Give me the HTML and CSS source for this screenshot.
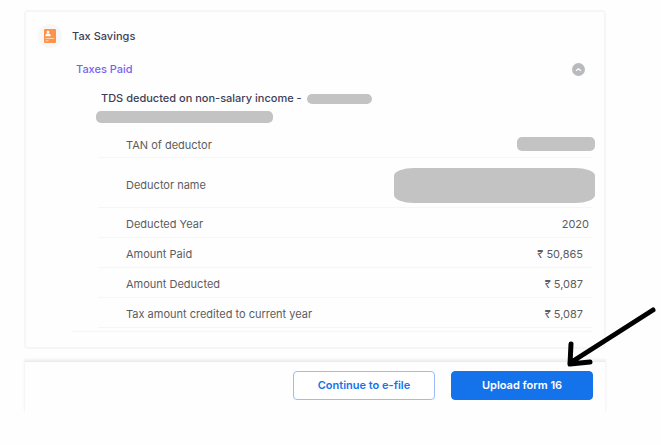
FILE: index.html
```html
<!DOCTYPE html>
<html lang="en">
<head>
    <meta charset="UTF-8">
    <meta name="viewport" content="width=device-width, initial-scale=1.0">
    <title>Tax Savings</title>
    <link rel="stylesheet" href="styles.css">
</head>
<body>
    <main class="card">
        <div class="card-header">
            <span class="icon">
                <svg width="12" height="14" viewBox="0 0 12 14" aria-hidden="true">
                    <rect width="12" height="14" rx="1" fill="#ff9248"/>
                    <circle cx="4" cy="3" r="1.3" fill="#fff"/>
                    <path d="M1.5 7.2V6.4C1.5 5 2.6 4.6 4 4.6s2.7.4 2.7 1.8v.8z" fill="#fff"/>
                    <path d="M1.5 9.5h8.5M1.5 11.8h3" stroke="#ffe0c8" stroke-width=".8"/>
                </svg>
            </span>
            <h1>Tax Savings</h1>
        </div>

        <div class="section-header">
            <h2>Taxes Paid</h2>
            <button type="button" class="toggle" aria-label="Collapse taxes paid">
                <svg width="13" height="13" viewBox="0 0 13 13" aria-hidden="true">
                    <circle cx="6.5" cy="6.5" r="6.5" fill="#b9babd"/>
                    <path d="M4 7.8l2.5-2 2.5 2" fill="none" stroke="#fff" stroke-width="1.2"/>
                </svg>
            </button>
        </div>

        <section class="details">
            <div class="deductor">
                <h3>TDS deducted on non-salary income - <span class="hidden-text id"></span></h3>
                <span class="hidden-text name"></span>
            </div>

            <table>
                <tr class="first">
                    <th scope="row">TAN of deductor</th>
                    <td><span class="hidden-text tan"></span></td>
                </tr>
                <tr class="tall">
                    <th scope="row">Deductor name</th>
                    <td><span class="hidden-text company"></span></td>
                </tr>
                <tr>
                    <th scope="row">Deducted Year</th>
                    <td class="year">2020</td>
                </tr>
                <tr>
                    <th scope="row">Amount Paid</th>
                    <td>₹ 50,865</td>
                </tr>
                <tr>
                    <th scope="row">Amount Deducted</th>
                    <td>₹ 5,087</td>
                </tr>
                <tr>
                    <th scope="row">Tax amount credited to current year</th>
                    <td>₹ 5,087</td>
                </tr>
            </table>
        </section>
    </main>

    <footer class="actions">
        <button type="button" class="btn btn-outline">Continue to e-file</button>
        <button type="button" class="btn btn-primary">Upload form 16</button>
        <svg class="arrow" width="92" height="64" viewBox="0 0 92 64" aria-hidden="true">
            <path d="M88 5L5 58M6 39L5 59L25 57" fill="none" stroke="#000" stroke-width="5" stroke-linecap="round" stroke-linejoin="round"/>
        </svg>
    </footer>
</body>
</html>
```

FILE: styles.css
```css
:root {
    --blue: #1473eb;
    --purple: #7b61f0;
    --dark: #3d3f55;
    --text: #5c5c60;
    --line: #f6f6f7;
    --hidden: #c3c3c3;
}

* {
    margin: 0;
    padding: 0;
    box-sizing: border-box;
}

body {
    background-color: #fefefe;
    padding: 10px 55px 32px 24px;
    font-family: Inter, "Liberation Sans", sans-serif;
    font-size: 11px;
    line-height: 16px;
    color: var(--text);
}

h1, h2, h3 {
    font-size: 11px;
    font-weight: 500;
    color: var(--dark);
}

.card {
    border: 2px solid var(--line);
    border-radius: 4px;
    padding: 12px 12px 15px;
}

.card-header {
    display: flex;
    align-items: center;
    gap: 10px;
}

.icon {
    display: flex;
    align-items: center;
    justify-content: center;
    width: 24px;
    height: 24px;
    border-radius: 50%;
    background-color: #f7f7f7;
}

.section-header {
    display: flex;
    align-items: center;
    justify-content: space-between;
    padding: 13px 7px 0 38px;
}

.section-header h2 {
    color: var(--purple);
}

.toggle {
    display: flex;
    background: none;
    border: none;
    cursor: pointer;
}

.details {
    margin-left: 34px;
    padding-top: 13px;
    border-bottom: 1px solid var(--line);
}

.deductor {
    margin-left: 24px;
}

.deductor h3 {
    margin-left: 5px;
}

.hidden-text {
    display: inline-block;
    vertical-align: middle;
    border-radius: 5px;
    background-color: var(--hidden);
}

.hidden-text.id {
    width: 65px;
    height: 10px;
    margin-left: 2px;
}

.hidden-text.name {
    display: block;
    width: 177px;
    height: 12px;
    margin-top: 5px;
}

.hidden-text.tan {
    width: 78px;
    height: 14px;
}

.hidden-text.company {
    width: 201px;
    height: 35px;
    border-radius: 20px / 8px;
}

table {
    width: calc(100% - 26px);
    margin: 8px 0 3px 26px;
    border-collapse: collapse;
}

tr {
    height: 30px;
    border-bottom: 1px solid var(--line);
}

tr.first {
    height: 26px;
}

tr.tall {
    height: 50px;
}

th {
    padding-top: 4px;
    padding-left: 28px;
    font-weight: 400;
    text-align: left;
}

td {
    padding-top: 4px;
    padding-right: 9px;
    text-align: right;
}

td.year {
    padding-right: 3px;
}

tr.first th {
    padding-top: 2px;
}

tr.first td {
    padding-top: 0;
}

tr.tall th,
tr.tall td {
    padding-top: 6px;
}

td .hidden-text {
    display: block;
    margin-left: auto;
    margin-right: -12px;
}

.actions {
    position: relative;
    display: flex;
    justify-content: flex-end;
    gap: 16px;
    margin-top: 12px;
    padding: 9px 12px 12px;
    border-top: 1px solid #ececec;
    border-left: 1px solid var(--line);
    border-right: 1px solid var(--line);
    box-shadow: 0 -2px 2px #f1f1f1;
}

.btn {
    width: 142px;
    height: 29px;
    border: 1px solid var(--blue);
    border-radius: 4px;
    font-family: inherit;
    font-size: 11px;
    font-weight: 600;
    cursor: pointer;
}

.btn-outline {
    border-color: #9bbcf8;
    background-color: #fff;
    color: var(--blue);
}

.btn-primary {
    background-color: var(--blue);
    color: #fff;
}

.arrow {
    position: absolute;
    top: -57px;
    right: -52px;
}
```
